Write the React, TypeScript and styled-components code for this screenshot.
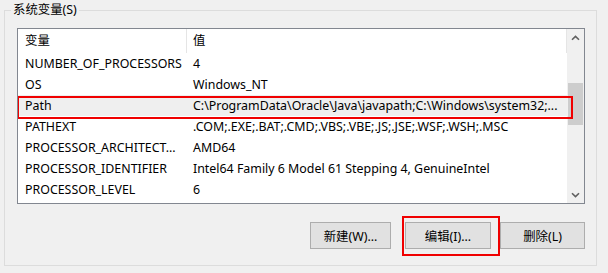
import styled, { createGlobalStyle } from "styled-components";

const GlobalStyle = createGlobalStyle`
  html, body {
    margin: 0;
    padding: 0;
    background: #f0f0f0;
  }
  body {
    font-family: "Noto Sans", "Noto Sans CJK SC", sans-serif;
    font-size: 12.4px;
    color: #000;
  }
`;

const variables = [
  { name: "NUMBER_OF_PROCESSORS", value: "4" },
  { name: "OS", value: "Windows_NT" },
  {
    name: "Path",
    value: "C:\\ProgramData\\Oracle\\Java\\javapath;C:\\Windows\\system32;...",
    selected: true,
  },
  { name: "PATHEXT", value: ".COM;.EXE;.BAT;.CMD;.VBS;.VBE;.JS;.JSE;.WSF;.WSH;.MSC" },
  { name: "PROCESSOR_ARCHITECT...", value: "AMD64" },
  {
    name: "PROCESSOR_IDENTIFIER",
    value: "Intel64 Family 6 Model 61 Stepping 4, GenuineIntel",
  },
  { name: "PROCESSOR_LEVEL", value: "6" },
];

function Chevron({ down }: { down?: boolean }) {
  return (
    <svg width="9" height="6" viewBox="0 0 9 6">
      <path
        d={down ? "M1 1.2 L4.5 4.6 L8 1.2" : "M1 4.8 L4.5 1.4 L8 4.8"}
        fill="none"
        stroke="#606060"
        strokeWidth="1.6"
      />
    </svg>
  );
}

function App() {
  return (
    <Page>
      <GlobalStyle />
      <GroupBox>
        <Legend>系统变量(S)</Legend>
        <ListBox>
          <ListContent>
            <HeaderRow>
              <HeaderCell $first>变量</HeaderCell>
              <HeaderCell>值</HeaderCell>
            </HeaderRow>
            {variables.map((v) => (
              <Row key={v.name} $selected={!!v.selected}>
                <NameCell>{v.name}</NameCell>
                <ValueCell>{v.value}</ValueCell>
              </Row>
            ))}
          </ListContent>
          <ScrollBar>
            <ArrowButton>
              <Chevron />
            </ArrowButton>
            <Track>
              <Thumb />
            </Track>
            <ArrowButton>
              <Chevron down />
            </ArrowButton>
          </ScrollBar>
        </ListBox>
        <ButtonRow>
          <Button $width={81}>新建(W)...</Button>
          <Button $width={86} $gap={14} $marked>
            编辑(I)...
          </Button>
          <Button $width={85} $gap={9}>
            删除(L)
          </Button>
        </ButtonRow>
      </GroupBox>
    </Page>
  );
}
export default App;

const Page = styled.div`
  width: 608px;
  height: 273px;
  overflow: hidden;
  background: #f0f0f0;
`;

const GroupBox = styled.fieldset`
  margin: 0 11px 0 4px;
  padding: 8px 11px 16px 12px;
  border: 1px solid #dcdcdc;
  min-width: 0;
`;

const Legend = styled.legend`
  margin-left: -6px;
  padding: 0 2px;
  line-height: 20px;
  font-size: 12.4px;
`;

const ListBox = styled.div`
  display: flex;
  height: 176px;
  box-sizing: border-box;
  border: 1px solid #828790;
  background: #fff;
  overflow: hidden;
`;

const ListContent = styled.div`
  flex: 1;
  display: flex;
  flex-direction: column;
  min-width: 0;
`;

const HeaderRow = styled.div`
  display: grid;
  grid-template-columns: 169px 1fr;
  height: 24px;
  flex-shrink: 0;
`;

const HeaderCell = styled.div<{ $first?: boolean }>`
  padding-left: ${(p) => (p.$first ? 7 : 6)}px;
  line-height: 24px;
  border-right: 1px solid #e5e5e5;
`;

const Row = styled.div<{ $selected: boolean }>`
  position: relative;
  display: grid;
  grid-template-columns: 169px 1fr;
  height: 21px;
  flex-shrink: 0;
  align-items: center;
  background: ${(p) => (p.$selected ? "#efefef" : "transparent")};

  &::after {
    content: "";
    display: ${(p) => (p.$selected ? "block" : "none")};
    position: absolute;
    left: -1px;
    right: -6px;
    top: 1px;
    bottom: -3px;
    border: 2px solid #f00000;
    z-index: 2;
  }
`;

const NameCell = styled.div`
  padding-left: 7px;
  white-space: nowrap;
  overflow: hidden;
`;

const ValueCell = styled.div`
  padding-left: 6px;
  white-space: nowrap;
  overflow: hidden;
`;

const ScrollBar = styled.div`
  width: 17px;
  flex-shrink: 0;
  display: flex;
  flex-direction: column;
  background: #f0f0f0;
`;

const ArrowButton = styled.div`
  height: 17px;
  display: flex;
  align-items: center;
  justify-content: center;
`;

const Track = styled.div`
  flex: 1;
`;

const Thumb = styled.div`
  margin: 37px 1px 0;
  height: 42px;
  background: #cdcdcd;
`;

const ButtonRow = styled.div`
  display: flex;
  justify-content: flex-end;
  margin-top: 18px;
`;

const Button = styled.button<{ $width: number; $gap?: number; $marked?: boolean }>`
  position: relative;
  width: ${(p) => p.$width}px;
  height: 27px;
  margin-left: ${(p) => p.$gap ?? 0}px;
  padding: 0;
  background: #e1e1e1;
  border: 1px solid #adadad;
  font-family: "Noto Sans", "Noto Sans CJK SC", sans-serif;
  font-size: 12.4px;
  color: #000;

  &::after {
    content: "";
    display: ${(p) => (p.$marked ? "block" : "none")};
    position: absolute;
    left: -4px;
    right: -10px;
    top: -7px;
    bottom: -8px;
    border: 2px solid #f00000;
  }
`;
